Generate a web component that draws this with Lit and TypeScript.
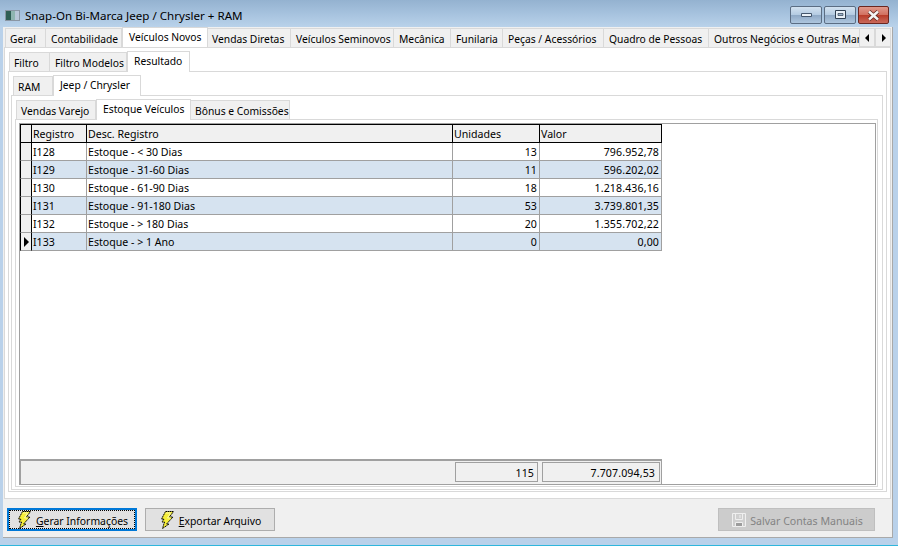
import { LitElement, html, css, svg } from "lit";
import { customElement } from "lit/decorators.js";

const mainTabs: [string, number][] = [["Geral",41],["Contabilidade",76],["Veículos Novos",86],["Vendas Diretas",83],["Veículos Seminovos",103],["Mecânica",57],["Funilaria",52],["Peças / Acessórios",101],["Quadro de Pessoas",105],["Outros Negócios e Outras Margens",170]];
const sub1: [string, number][] = [["Filtro",41],["Filtro Modelos",77],["Resultado",63]];
const sub2: [string, number][] = [["RAM",40],["Jeep / Chrysler",88]];
const sub3: [string, number][] = [["Vendas Varejo",80],["Estoque Veículos",95],["Bônus e Comissões",99]];
const rows = [
  ["I128","Estoque - < 30 Dias","13","796.952,78"],
  ["I129","Estoque - 31-60 Dias","11","596.202,02"],
  ["I130","Estoque - 61-90 Dias","18","1.218.436,16"],
  ["I131","Estoque - 91-180 Dias","53","3.739.801,35"],
  ["I132","Estoque - > 180 Dias","20","1.355.702,22"],
  ["I133","Estoque - > 1 Ano","0","0,00"],
];

const bolt = svg`<svg class="ico" width="13" height="18" viewBox="0 0 13 18"><path d="M4.500.500h8L8.500 6H12L5.500 13H8L1.500 17.500 3.500 11H1L3 8H.500Z" fill="#f5ee3a" stroke="#000" stroke-dasharray="1.500 .5"/><path d="M5 2h4.500L6.500 7H9.500" fill="none" stroke="#fbf8a8"/></svg>`;
const floppy = svg`<svg class="ico" width="14" height="14" viewBox="0 0 14 14"><path d="M.5.500h13v13H.5Z" fill="#cfcfcf" stroke="#efefef"/><path d="M3.500 1v5.500h7V1" fill="none" stroke="#efefef"/><path d="M8 2v3" stroke="#efefef"/><path d="M3.500 9.500h7v4h-7Z" fill="#9c9c9c" stroke="#efefef"/></svg>`;

@customElement("app-root")
export class AppRoot extends LitElement {
  static styles = css`
    :host { display: block; width: 898px; height: 546px; overflow: hidden; font: 10.6px "Noto Sans", "Open Sans", sans-serif; color: #000; }
    .win { width: 898px; height: 546px; box-sizing: border-box; display: flex; flex-direction: column; background: #b9d1ea; border-bottom: 1px solid #2fb6dc; }
    .title { height: 27px; flex: none; display: flex; align-items: center; background: linear-gradient(180deg, #94b2d0 0, #a6c2de 50%, #b9d2ea 100%); padding: 4px 0 0 5px; box-sizing: border-box; font-size: 11.6px; }
    .appicon { width: 15px; height: 11px; margin-right: 5px; background: linear-gradient(90deg, #2f5f55 0 5px, #8fb5b0 5px 9px, #b9c7d8 9px); border: 1px solid #8a96a4; box-sizing: border-box; }
    .title .t { flex: 1; }
    .caps { display: flex; gap: 2px; align-self: flex-start; margin-top: 2px; margin-right: 9px; }
    .cap { width: 32px; height: 18px; box-sizing: border-box; border: 1px solid #5b6d83; border-radius: 2px; background: linear-gradient(180deg, #d3e2f0 0, #b4cbe2 48%, #8fa9c6 52%, #aec6de 100%); display: flex; align-items: center; justify-content: center; }
    .cap.close { width: 31px; border-color: #6b2620; background: linear-gradient(180deg, #e0998c 0, #d27161 48%, #b93c2a 52%, #c9695a 100%); }
    .client { flex: 1; margin: 0 5px 7px 3px; min-height: 0; background: #f0f0f0; border-right: 1px solid #a9a9a9; border-bottom: 1px solid #a9a9a9; display: flex; flex-direction: column; }
    .tabs { display: flex; align-items: flex-end; flex: none; position: relative; font-size: 10.3px; }
    .tab { box-sizing: border-box; height: 19px; flex: none; background: #f0f0f0; border: 1px solid #d9d9d9; border-bottom: none; border-left: none; display: flex; align-items: center; padding: 2px 0 0 5px; white-space: nowrap; overflow: hidden; }
    .tab:first-child { border-left: 1px solid #d9d9d9; padding-left: 4px; }
    .tab.on { height: 21px; background: #fff; border-left: 1px solid #d9d9d9; padding: 0 0 2px 6px; position: relative; z-index: 1; margin-bottom: -1px; }
    .tab.on + .tab { padding-left: 4px; }
    .tabs1 { margin-left: 1px; padding-left: 1px; height: 20px; width: 886px; overflow: hidden; }
    .pane { background: #fff; border: 1px solid #d9d9d9; display: flex; flex-direction: column; box-sizing: border-box; min-height: 0; flex: 1; }
    .p1 { margin: 0 1px 0 1px; padding: 4px 3px 6px 3px; }
    .p2 { padding: 4px 3px 1px 2px; }
    .p3 { padding: 4px 4px 2px 3px; }
    .p4 { padding: 0 0 1px 3px; }
    .tabsn { height: 19px; }
    .m1 { margin-left: 1px; }
    .m2 { margin-left: 2px; }
    .scroll { position: absolute; left: 855px; top: 1px; display: flex; height: 19px; z-index: 2; background: #f0f0f0; }
    .scroll span { width: 16px; height: 19px; box-sizing: border-box; background: #f0f0f0; border: 1px solid #d9d9d9; display: flex; align-items: center; justify-content: center; }
    .grid { flex: 1; min-height: 0; margin-top: 3px; margin-right: 1px; border: 1px solid #a0a0a0; background: #fff; display: flex; flex-direction: column; }
    .tbl { flex: 1; display: flex; flex-direction: column; }
    .row { display: grid; grid-template-columns: 12px 55px 366px 87px 122px; height: 18px; box-sizing: border-box; width: 642px; }
    .c { box-sizing: border-box; border-right: 1px solid #a0a0a0; border-bottom: 1px solid #a0a0a0; padding: 0 1px; line-height: 19px; white-space: nowrap; overflow: hidden; }
    .c.r { text-align: right; padding-right: 2px; letter-spacing: .12px; }
    .c.ind { background: #f0f0f0; border-left: 1px solid #000; border-right-color: #000; display: flex; align-items: center; padding: 0; justify-content: center; }
    .row.alt .c:not(.ind) { background: #d6e3f0; }
    .head { height: 19px; }
    .head .c { background: #f0f0f0; border-top: 1px solid #000; border-right-color: #000; border-bottom-color: #000; line-height: 19px; }
    .foot { height: 25px; flex: none; width: 642px; box-sizing: border-box; border-top: 2px solid #a0a0a0; border-left: 1px solid #a0a0a0; border-right: 1px solid #a0a0a0; background: #f0f0f0; display: flex; justify-content: flex-end; gap: 4px; padding: 1px 1px 0 0; }
    .foot span { box-sizing: border-box; height: 20px; border: 1px solid #a0a0a0; text-align: right; padding-right: 3px; line-height: 20px; letter-spacing: .12px; }
    .w1 { width: 83px; } .foot .w2 { width: 118px; padding-right: 4px; }
    .bar { height: 38px; flex: none; display: flex; align-items: flex-start; padding: 9px 17px 0 4px; box-sizing: border-box; gap: 8px; }
    .btn { box-sizing: border-box; height: 23px; width: 130px; background: #e1e1e1; border: 1px solid #adadad; display: flex; align-items: center; justify-content: center; gap: 5px; padding-left: 2px; font-size: 10.4px; }
    .btn span { padding-top: 2px; }
    .btn.focus { border: 2px solid #0078d7; outline: 1px dotted #000; outline-offset: -3px; }
    .btn.dis { width: 157px; margin-left: auto; background: #cccccc; border-color: #bfbfbf; color: #838383; gap: 4px; font-size: 10.6px; }
    .ico { flex: none; }
    u { text-underline-offset: 1px; }
  `;

  private tabs(list: [string, number][], active: number, cls = "tabsn", extra: unknown = "") {
    return html`<div class="tabs ${cls}">${list.map(([t, w], i) => html`<div class="tab ${i === active ? "on" : ""}" style="width:${w}px">${t}</div>`)}${extra}</div>`;
  }

  render() {
    const scroll = html`<div class="scroll"><span><svg width="5" height="8" viewBox="0 0 5 8"><path d="M4 0v8L0 4Z"/></svg></span><span><svg width="5" height="8" viewBox="0 0 5 8"><path d="M1 0v8l4-4Z"/></svg></span></div>`;
    return html`<div class="win">
      <div class="title">
        <div class="appicon"></div><div class="t">Snap-On Bi-Marca Jeep / Chrysler + RAM</div>
        <div class="caps">
          <div class="cap"><svg width="13" height="6" viewBox="0 0 13 6"><path d="M1.500 1.500h10v3h-10Z" fill="#eaf1f8" stroke="#44566c"/></svg></div>
          <div class="cap"><svg width="13" height="10" viewBox="0 0 13 10"><path d="M1.500.500h10v8h-10Z" fill="#e8f0f8" stroke="#2f3f52"/><path d="M4 3.500h5v2H4Z" fill="#9db4cc" stroke="#2f3f52" stroke-width=".7"/></svg></div>
          <div class="cap close"><svg width="15" height="11" viewBox="0 0 15 11"><path d="M3 1.500l9 8M12 1.500l-9 8" stroke="#5a231c" stroke-width="4"/><path d="M3 1.500l9 8M12 1.500l-9 8" stroke="#f4f4f4" stroke-width="2.500"/></svg></div>
        </div>
      </div>
      <div class="client">
        ${this.tabs(mainTabs, 2, "tabs1", scroll)}
        <div class="pane p1">
          ${this.tabs(sub1, 2, "tabsn m1")}
          <div class="pane p2">
            ${this.tabs(sub2, 1, "tabsn m2")}
            <div class="pane p3">
              ${this.tabs(sub3, 1, "tabsn m1")}
              <div class="pane p4">
                <div class="grid">
                  <div class="tbl">
                    <div class="row head"><div class="c ind"></div><div class="c">Registro</div><div class="c">Desc. Registro</div><div class="c">Unidades</div><div class="c">Valor</div></div>
                    ${rows.map((r, i) => html`<div class="row ${i % 2 ? "alt" : ""}">
                      <div class="c ind">${i === 5 ? html`<svg width="5" height="10" viewBox="0 0 5 10"><path d="M0 0v10l5-5Z"/></svg>` : ""}</div>
                      <div class="c">${r[0]}</div><div class="c">${r[1]}</div><div class="c r">${r[2]}</div><div class="c r">${r[3]}</div></div>`)}
                  </div>
                  <div class="foot"><span class="w1">115</span><span class="w2">7.707.094,53</span></div>
                </div>
              </div>
            </div>
          </div>
        </div>
        <div class="bar">
          <div class="btn focus">${bolt}<span><u>G</u>erar Informações</span></div>
          <div class="btn">${bolt}<span><u>E</u>xportar Arquivo</span></div>
          <div class="btn dis">${floppy}<span>Salvar Contas Manuais</span></div>
        </div>
      </div>
    </div>`;
  }
}
